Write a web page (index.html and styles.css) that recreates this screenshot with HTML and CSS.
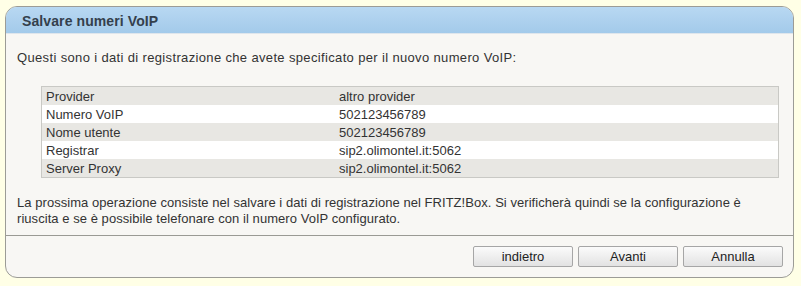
FILE: index.html
```html
<!DOCTYPE html>
<html lang="it">
<head>
  <meta charset="UTF-8" />
  <title>Salvare numeri VoIP</title>
  <link rel="stylesheet" href="styles.css">
</head>
<body>
  <div class="box">
    <div class="box-head">
      <h2>Salvare numeri VoIP</h2>
    </div>
    <div class="box-body">
      <p class="intro">Questi sono i dati di registrazione che avete specificato per il nuovo numero VoIP:</p>

      <table class="daten">
        <tr><td class="lbl">Provider</td><td>altro provider</td></tr>
        <tr><td class="lbl">Numero VoIP</td><td>502123456789</td></tr>
        <tr><td class="lbl">Nome utente</td><td>502123456789</td></tr>
        <tr><td class="lbl">Registrar</td><td>sip2.olimontel.it:5062</td></tr>
        <tr><td class="lbl">Server Proxy</td><td>sip2.olimontel.it:5062</td></tr>
      </table>

      <p class="hint">La prossima operazione consiste nel salvare i dati di registrazione nel FRITZ!Box. Si verificherà quindi se la configurazione è riuscita e se è possibile telefonare con il numero VoIP configurato.</p>
    </div>
    <div class="buttons">
      <button type="button">indietro</button>
      <button type="button">Avanti</button>
      <button type="button">Annulla</button>
    </div>
  </div>
</body>
</html>
```

FILE: styles.css
```css
body {
  margin: 0;
  padding: 6px 0 0 5px;
  background-color: #ffffe6;
  font-family: "Liberation Sans", Arial, sans-serif;
  font-size: 13px;
  color: #333;
}
.box {
  width: 787px;
  border: 1px solid #9c9c96;
  border-radius: 12px;
  background-color: #f8f7f4;
  overflow: hidden;
}
.box-head {
  height: 26px;
  background: linear-gradient(#b8d8f2, #a3caea);
  border-bottom: 1px solid #dfe6ec;
}
.box-head h2 {
  margin: 0;
  padding: 6px 0 0 16px;
  font-size: 14px;
  line-height: 16px;
  color: #34404c;
  letter-spacing: 0.1px;
}
.box-body {
  padding: 15px 11px 8px 11px;
  border-bottom: 1px solid #9a9a94;
}
.intro {
  margin: 0 0 20px 0;
  line-height: 17px;
  letter-spacing: 0.35px;
}
/* Tabelle mit den Registrierungsdaten */
.daten {
  width: 738px;
  margin-left: 24px;
  border-collapse: collapse;
  border: 1px solid #c9c9c5;
}
.daten td {
  padding: 0 4px;
  height: 18px;
  line-height: 17px;
}
.daten td.lbl {
  width: 285px;
}
.daten tr:nth-child(odd) td {
  background-color: #e8e7e3;
}
.daten tr:nth-child(even) td {
  background-color: #ffffff;
}
.hint {
  margin: 17px 0 0 0;
  line-height: 16px;
  letter-spacing: 0.05px;
  padding-right: 30px;
}
.buttons {
  display: flex;
  justify-content: flex-end;
  gap: 5px;
  padding: 10px 10px 10px 0;
}
.buttons button {
  width: 100px;
  height: 21px;
  padding: 0;
  font-family: "Liberation Sans", Arial, sans-serif;
  font-size: 13px;
  color: #222;
  border: 1px solid #a6a6a6;
  border-radius: 2px;
  background: linear-gradient(#fbfbfb, #e2e2e2);
}
```
